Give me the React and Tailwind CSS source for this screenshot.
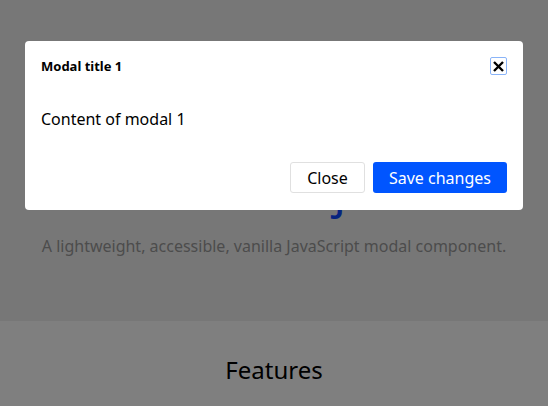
export default function App() {
  return (
    <div className="relative h-[406px] w-[548px] overflow-hidden bg-white font-['Noto_Sans',sans-serif]">
      <header className="flex h-[321px] flex-col items-center bg-[#efefef] pt-[166px]">
        <h1 className="text-[48px] leading-[48px] text-[#0d47ff]">Modal.js</h1>
        <p className="mt-[20px] text-[16px] leading-6 text-[#999999]">
          A lightweight, accessible, vanilla JavaScript modal component.
        </p>
      </header>
      <section className="flex justify-center pt-[33px]">
        <h2 className="text-[24px] leading-8 text-black">Features</h2>
      </section>

      <div className="absolute inset-0 bg-black/50">
        <div className="mx-[25px] mt-[41px] h-[169px] rounded-[4px] bg-white">
          <div className="flex items-center justify-between px-4 pt-[15px]">
            <h3 className="text-[13px] font-bold leading-5 text-black">Modal title 1</h3>
            <button className="flex h-[18px] w-[17px] items-center justify-center rounded-[2px] border border-[#8ab4f8] bg-white">
              <svg width="11" height="11" viewBox="0 0 11 11">
                <path d="M1 1L10 10M10 1L1 10" stroke="#000" strokeWidth="2.4" />
              </svg>
            </button>
          </div>
          <p className="mt-[31px] px-4 text-[16px] leading-6 text-black">Content of modal 1</p>
          <div className="mt-[31px] flex justify-end gap-2 px-4">
            <button className="h-[31px] w-[75px] rounded-[3px] border border-[#e0e0e0] bg-white text-[16px] text-black">
              Close
            </button>
            <button className="h-[31px] w-[134px] rounded-[3px] bg-[#0055ff] text-[16px] text-white">
              Save changes
            </button>
          </div>
        </div>
      </div>
    </div>
  );
}
